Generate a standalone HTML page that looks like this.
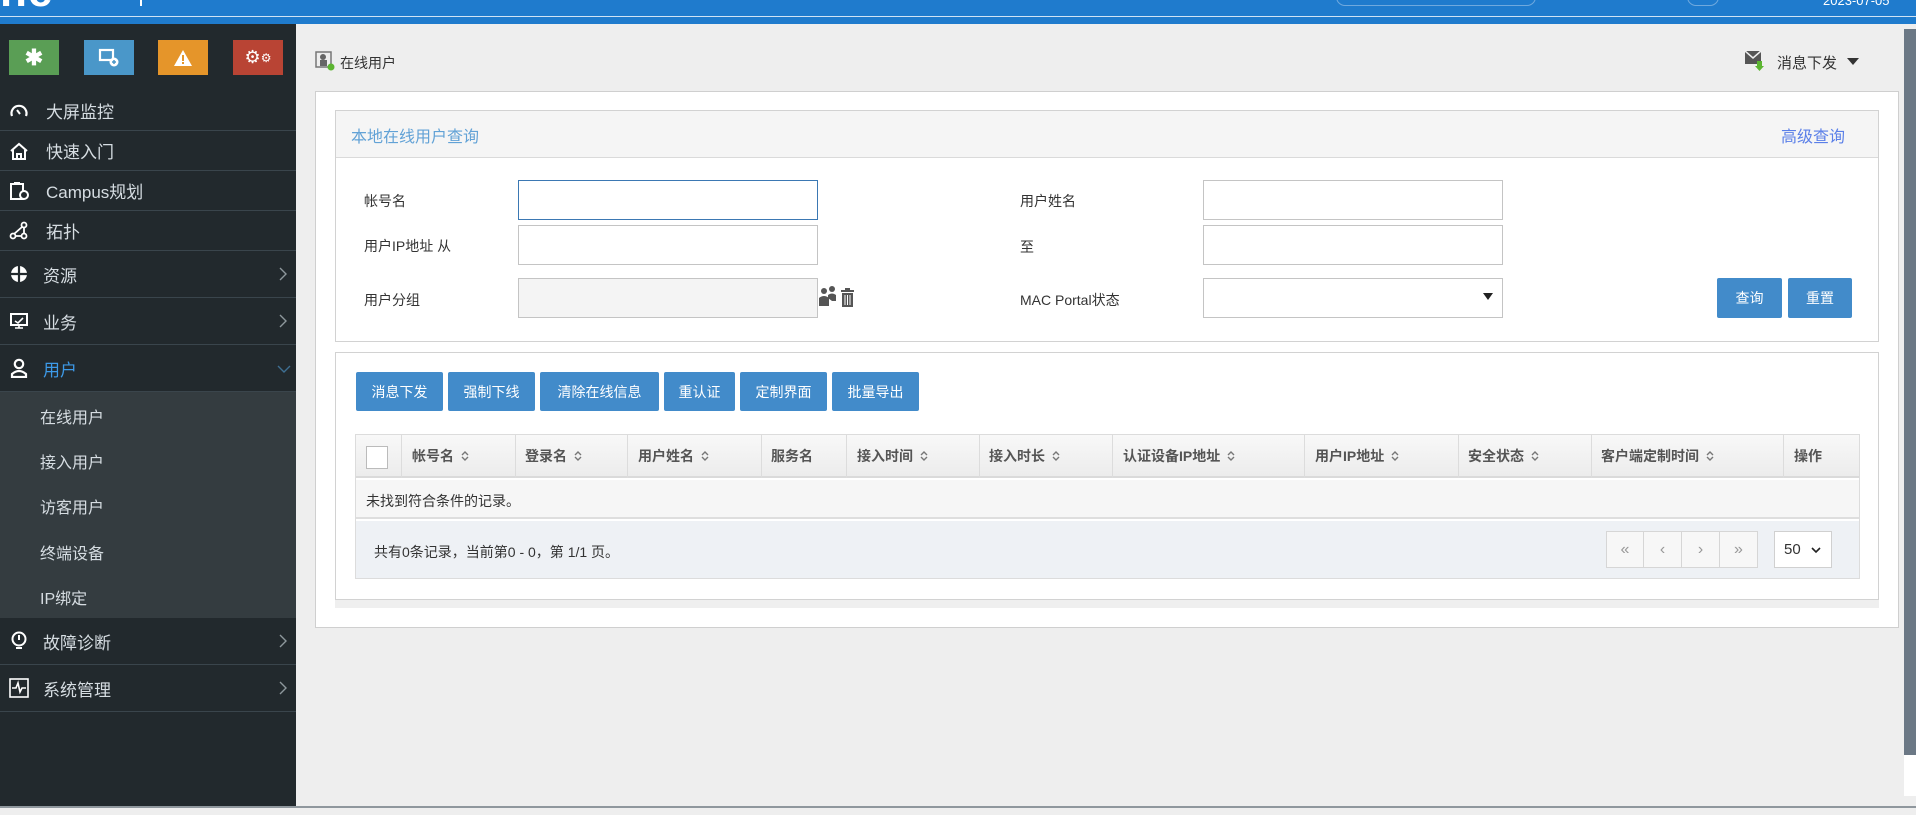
<!DOCTYPE html>
<html><head><meta charset="utf-8"><style>
*{margin:0;padding:0;box-sizing:border-box}
body{width:1916px;height:815px;overflow:hidden;background:#eeeeee;font-family:"Liberation Sans","Noto Sans CJK SC",sans-serif;font-size:14px;color:#333;position:relative}
.a{position:absolute}
.top{left:0;top:0;width:1916px;height:24px;background:#1f7bcd}
.side{left:0;top:24px;width:296px;height:782px;background:#22292d}
.qi{top:40px;width:50px;height:35px;display:flex;align-items:center;justify-content:center}
.mi{left:0;width:296px;color:#d6dde2;font-size:17px;border-bottom:1px solid #3a454c;display:flex;align-items:center}
.mi .ic{position:absolute;left:9px;width:20px;height:20px;display:flex;align-items:center;justify-content:center}
.mi .ch{position:absolute;left:279px;top:50%;margin-top:-7px;width:8px;height:14px}
.sub{left:0;top:392px;width:296px;height:226px;background:#343c40}
.si{left:40px;color:#d6dde2;font-size:16px}
.lbl{font-size:14px;color:#333}
.inp{background:#fff;border:1px solid #c4c4c4;height:40px}
.btn{background:#428bca;color:#fff;font-size:14px;display:flex;align-items:center;justify-content:center;border-radius:2px}
.th{top:434px;height:44px;display:flex;align-items:center;font-size:14px;font-weight:bold;color:#555}
.sort{display:inline-block;width:8px;height:12px;margin-left:7px}
.vb{top:434px;width:1px;height:44px;background:#dcdcdc}
.pg{top:531px;width:38px;height:37px;border:1px solid #d6d6d6;background:#f7f7f7;color:#999;display:flex;align-items:center;justify-content:center;font-size:16px}
</style></head><body>
<svg width="0" height="0" style="position:absolute"><defs>
<symbol id="chv" viewBox="0 0 8 14"><path d="M1 1l6 6-6 6" fill="none" stroke="#8e979c" stroke-width="1.4"/></symbol>
<symbol id="srt" viewBox="0 0 8 12"><path d="M1 5l3-3 3 3M1 7l3 3 3-3" fill="none" stroke="#777" stroke-width="1.4"/></symbol>
</defs></svg>
<div class="a top"></div>
<div class="a" style="left:0;top:16px;width:1916px;height:1px;background:#cfe3f5"></div>
<div class="a" style="left:0;top:-30px;color:#fff;font-size:44px;font-weight:bold;letter-spacing:1px;line-height:1">ne</div>
<div class="a" style="left:140px;top:0;width:2px;height:6px;background:#fff"></div>
<div class="a" style="left:1336px;top:-12px;width:200px;height:18px;border:1px solid #6fa9de;border-radius:9px"></div>
<div class="a" style="left:1687px;top:-12px;width:32px;height:18px;border:1px solid #6fa9de;border-radius:16px"></div>
<div class="a" style="left:1823px;top:-7px;color:#fff;font-size:13px">2023-07-05</div>

<div class="a side"></div>
<div class="a qi" style="left:9px;background:#5a9e55;color:#fff;font-size:22px;font-weight:bold">✱</div>
<div class="a qi" style="left:84px;background:#4a97c9"><svg width="22" height="20" viewBox="0 0 22 20"><rect x="2" y="2" width="13" height="10" fill="none" stroke="#fff" stroke-width="2.2"/><circle cx="16" cy="14" r="4.5" fill="#fff"/><path d="M14 14h4M16 12v4" stroke="#4a97c9" stroke-width="1.5"/></svg></div>
<div class="a qi" style="left:158px;background:#e5952a"><svg width="20" height="18" viewBox="0 0 20 18"><path d="M10 1L19 17H1Z" fill="#fff"/><rect x="9" y="6" width="2" height="6" fill="#e5952a"/><rect x="9" y="13" width="2" height="2" fill="#e5952a"/></svg></div>
<div class="a qi" style="left:233px;background:#b94434;color:#fff;font-size:18px">⚙<span style="font-size:12px">⚙</span></div>

<div class="a mi" style="top:91px;height:40px"><span class="ic"><svg width="20" height="18"><path d="M3 14A7.5 7.5 0 1 1 17 14" fill="none" stroke="#fff" stroke-width="2.2"/><path d="M8 8l3 4" stroke="#fff" stroke-width="2"/></svg></span><span style="margin-left:46px">大屏监控</span></div>
<div class="a mi" style="top:131px;height:40px"><span class="ic"><svg width="20" height="18"><path d="M2 9L10 2 18 9M4 8v9h12V8M8 17v-5h4v5" fill="none" stroke="#fff" stroke-width="2"/></svg></span><span style="margin-left:46px">快速入门</span></div>
<div class="a mi" style="top:171px;height:40px"><span class="ic"><svg width="20" height="20"><rect x="2" y="3" width="12" height="15" fill="none" stroke="#fff" stroke-width="2"/><rect x="5" y="1" width="6" height="3" fill="#fff"/><circle cx="15" cy="14" r="4" fill="#22292d" stroke="#fff" stroke-width="2"/></svg></span><span style="margin-left:46px">Campus规划</span></div>
<div class="a mi" style="top:211px;height:40px"><span class="ic"><svg width="20" height="20"><circle cx="15" cy="4" r="2.5" fill="none" stroke="#fff" stroke-width="1.8"/><circle cx="4" cy="15" r="2.5" fill="none" stroke="#fff" stroke-width="1.8"/><circle cx="15" cy="15" r="2.5" fill="none" stroke="#fff" stroke-width="1.8"/><path d="M13 6L5 13M7 15h6M15 7v6" stroke="#fff" stroke-width="1.8"/></svg></span><span style="margin-left:46px">拓扑</span></div>
<div class="a mi" style="top:251px;height:47px"><span class="ic"><svg width="18" height="18"><circle cx="9" cy="9" r="8" fill="#fff"/><path d="M9 0v18M0 9h18" stroke="#22292d" stroke-width="2.2"/></svg></span><span style="margin-left:43px">资源</span><svg class="ch"><use href="#chv"/></svg></div>
<div class="a mi" style="top:298px;height:47px"><span class="ic"><svg width="20" height="18"><rect x="2" y="2" width="16" height="11" fill="none" stroke="#fff" stroke-width="2"/><path d="M6 16h8M10 13v3M6 9l3 2 5-5" stroke="#fff" stroke-width="1.6" fill="none"/></svg></span><span style="margin-left:43px">业务</span><svg class="ch"><use href="#chv"/></svg></div>
<div class="a mi" style="top:345px;height:47px;color:#3d9ae8"><span class="ic"><svg width="18" height="20"><circle cx="9" cy="6" r="4.2" fill="none" stroke="#fff" stroke-width="2.2"/><path d="M2 19v-3q7-6 14 0v3z" fill="none" stroke="#fff" stroke-width="2.2"/></svg></span><span style="margin-left:43px">用户</span><svg class="a" style="left:277px;top:20px" width="14" height="8"><path d="M1 1l6 6 6-6" fill="none" stroke="#3e6f92" stroke-width="1.4"/></svg></div>
<div class="a sub"></div>
<div class="a si" style="top:404px">在线用户</div>
<div class="a si" style="top:449px">接入用户</div>
<div class="a si" style="top:494px">访客用户</div>
<div class="a si" style="top:540px">终端设备</div>
<div class="a si" style="top:585px">IP绑定</div>
<div class="a mi" style="top:618px;height:47px"><span class="ic"><svg width="16" height="20"><circle cx="8" cy="8" r="6.5" fill="none" stroke="#fff" stroke-width="2"/><path d="M8 4v5M5 17h6" stroke="#fff" stroke-width="2"/></svg></span><span style="margin-left:43px">故障诊断</span><svg class="ch"><use href="#chv"/></svg></div>
<div class="a mi" style="top:665px;height:47px"><span class="ic"><svg width="20" height="20"><rect x="1" y="1" width="18" height="18" fill="none" stroke="#fff" stroke-width="1.6"/><path d="M3 10h4l2-5 2 9 2-4h4" stroke="#fff" stroke-width="1.6" fill="none"/></svg></span><span style="margin-left:43px">系统管理</span><svg class="ch"><use href="#chv"/></svg></div>

<div class="a" style="left:296px;top:806px;width:1620px;height:2px;background:#8f979d"></div>
<div class="a" style="left:0;top:806px;width:296px;height:2px;background:#8f979d"></div>
<div class="a" style="left:1904px;top:29px;width:12px;height:726px;background:#6b7885"></div>
<div class="a" style="left:1904px;top:755px;width:12px;height:41px;background:#fff"></div>

<svg class="a" style="left:315px;top:51px" width="20" height="20"><rect x="1" y="1" width="15" height="15" fill="none" stroke="#777" stroke-width="1.5"/><circle cx="8" cy="6" r="3" fill="#666"/><rect x="5" y="9" width="7" height="6" fill="#666"/><circle cx="16" cy="16" r="3.5" fill="#5cb531"/></svg>
<div class="a" style="left:340px;top:53px;font-size:14px;color:#333">在线用户</div>
<svg class="a" style="left:1745px;top:50px" width="20" height="22"><rect x="0" y="1" width="16" height="13" fill="#555"/><path d="M0 1l8 7 8-7" stroke="#eee" stroke-width="1.5" fill="none"/><path d="M12 11h5v5h2l-4.5 5-4.5-5h2z" fill="#5cb531"/></svg>
<div class="a" style="left:1777px;top:52px;font-size:15px;color:#333">消息下发</div>
<div class="a" style="left:1847px;top:58px;width:0;height:0;border-left:6px solid transparent;border-right:6px solid transparent;border-top:7px solid #333"></div>

<div class="a" style="left:315px;top:91px;width:1584px;height:537px;background:#fff;border:1px solid #cfcfcf"></div>
<div class="a" style="left:335px;top:110px;width:1544px;height:232px;background:#fff;border:1px solid #d2d2d2"></div>
<div class="a" style="left:336px;top:111px;width:1542px;height:47px;background:#f5f5f5;border-bottom:1px solid #dadada"></div>
<div class="a" style="left:351px;top:123px;font-size:16px;color:#62a2d6">本地在线用户查询</div>
<div class="a" style="left:1781px;top:123px;font-size:16px;color:#5a7fe8">高级查询</div>

<div class="a lbl" style="left:364px;top:191px">帐号名</div>
<div class="a inp" style="left:518px;top:180px;width:300px;border-color:#3b78b3"></div>
<div class="a lbl" style="left:364px;top:236px">用户IP地址 从</div>
<div class="a inp" style="left:518px;top:225px;width:300px"></div>
<div class="a lbl" style="left:364px;top:290px">用户分组</div>
<div class="a inp" style="left:518px;top:278px;width:300px;background:#f4f4f4"></div>
<svg class="a" style="left:818px;top:286px" width="40" height="22"><circle cx="6" cy="5" r="3" fill="#555"/><path d="M1 20v-8q5-4 10 0v8z" fill="#555"/><circle cx="14" cy="3" r="3" fill="#555"/><path d="M10 12v-3q4-3 8 0v6h-4z" fill="#555"/><rect x="23" y="4" width="13" height="2" fill="#555"/><rect x="27" y="2" width="5" height="2" fill="#555"/><rect x="24" y="7" width="11" height="14" fill="#555"/><path d="M27 9v10M29.5 9v10M32 9v10" stroke="#fff" stroke-width="1"/></svg>

<div class="a lbl" style="left:1020px;top:191px">用户姓名</div>
<div class="a inp" style="left:1203px;top:180px;width:300px"></div>
<div class="a lbl" style="left:1020px;top:237px">至</div>
<div class="a inp" style="left:1203px;top:225px;width:300px"></div>
<div class="a lbl" style="left:1020px;top:290px">MAC Portal状态</div>
<div class="a inp" style="left:1203px;top:278px;width:300px"></div>
<div class="a" style="left:1483px;top:293px;width:0;height:0;border-left:5px solid transparent;border-right:5px solid transparent;border-top:7px solid #222"></div>
<div class="a btn" style="left:1717px;top:278px;width:65px;height:40px">查询</div>
<div class="a btn" style="left:1788px;top:278px;width:64px;height:40px">重置</div>

<div class="a" style="left:335px;top:352px;width:1544px;height:248px;background:#fff;border:1px solid #d2d2d2"></div>
<div class="a" style="left:335px;top:600px;width:1544px;height:8px;background:#efefef"></div>
<div class="a btn" style="left:356px;top:372px;width:87px;height:39px">消息下发</div>
<div class="a btn" style="left:448px;top:372px;width:87px;height:39px">强制下线</div>
<div class="a btn" style="left:540px;top:372px;width:119px;height:39px">清除在线信息</div>
<div class="a btn" style="left:664px;top:372px;width:71px;height:39px">重认证</div>
<div class="a btn" style="left:740px;top:372px;width:87px;height:39px">定制界面</div>
<div class="a btn" style="left:832px;top:372px;width:87px;height:39px">批量导出</div>

<div class="a" style="left:355px;top:434px;width:1505px;height:145px;border:1px solid #dcdcdc"></div>
<div class="a" style="left:356px;top:435px;width:1503px;height:43px;background:linear-gradient(#f8f8f8,#ececec);border-bottom:2px solid #dadada"></div>
<div class="a" style="left:366px;top:446px;width:22px;height:23px;background:#fff;border:1px solid #bbb"></div>
<div class="a vb" style="left:401px"></div><div class="a vb" style="left:515px"></div><div class="a vb" style="left:627px"></div><div class="a vb" style="left:761px"></div><div class="a vb" style="left:846px"></div><div class="a vb" style="left:979px"></div><div class="a vb" style="left:1112px"></div><div class="a vb" style="left:1304px"></div><div class="a vb" style="left:1458px"></div><div class="a vb" style="left:1591px"></div><div class="a vb" style="left:1783px"></div>
<div class="a th" style="left:412px">帐号名<svg class="sort"><use href="#srt"/></svg></div>
<div class="a th" style="left:525px">登录名<svg class="sort"><use href="#srt"/></svg></div>
<div class="a th" style="left:638px">用户姓名<svg class="sort"><use href="#srt"/></svg></div>
<div class="a th" style="left:771px">服务名</div>
<div class="a th" style="left:857px">接入时间<svg class="sort"><use href="#srt"/></svg></div>
<div class="a th" style="left:989px">接入时长<svg class="sort"><use href="#srt"/></svg></div>
<div class="a th" style="left:1123px">认证设备IP地址<svg class="sort"><use href="#srt"/></svg></div>
<div class="a th" style="left:1315px">用户IP地址<svg class="sort"><use href="#srt"/></svg></div>
<div class="a th" style="left:1468px">安全状态<svg class="sort"><use href="#srt"/></svg></div>
<div class="a th" style="left:1601px">客户端定制时间<svg class="sort"><use href="#srt"/></svg></div>
<div class="a th" style="left:1794px">操作</div>
<div class="a" style="left:356px;top:480px;width:1503px;height:39px;background:#f6f6f6;border-bottom:2px solid #dedede"></div>
<div class="a" style="left:366px;top:491px;font-size:14px">未找到符合条件的记录。</div>
<div class="a" style="left:356px;top:521px;width:1503px;height:57px;background:#eef1f5"></div>
<div class="a" style="left:374px;top:542px;font-size:14px">共有0条记录，当前第0 - 0，第 1/1 页。</div>
<div class="a pg" style="left:1606px">«</div>
<div class="a pg" style="left:1644px;border-left:none">‹</div>
<div class="a pg" style="left:1682px;border-left:none">›</div>
<div class="a pg" style="left:1720px;border-left:none">»</div>
<div class="a" style="left:1774px;top:531px;width:58px;height:37px;background:#fff;border:1px solid #d0d0d0;font-size:15px;padding:9px 0 0 9px">50 <svg width="10" height="7" style="margin-left:6px"><path d="M1 1l4 4 4-4" fill="none" stroke="#222" stroke-width="1.6"/></svg></div>
</body></html>
